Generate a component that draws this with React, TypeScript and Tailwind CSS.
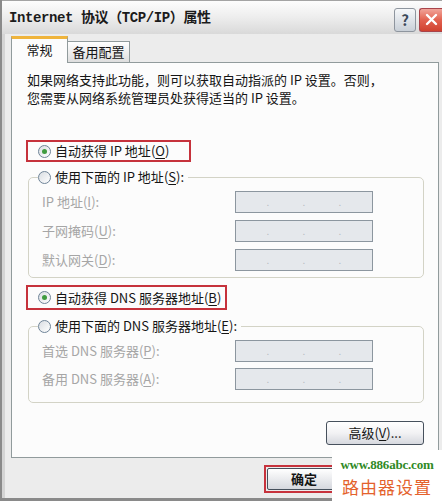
import React from 'react'

function Radio({ checked }: { checked?: boolean }) {
    return (
        <span className="flex h-[13px] w-[13px] shrink-0 items-center justify-center rounded-full border border-[#6f8498] bg-linear-to-br from-[#d9dde2] to-white">
            {checked && (
                <span className="h-[5px] w-[5px] rounded-full bg-[#3f9b3f]" />
            )}
        </span>
    )
}

function Key({ k }: { k: string }) {
    return (
        <>
            (<span className="underline underline-offset-2">{k}</span>)
        </>
    )
}

function IpBox() {
    return (
        <div className="flex h-[22px] w-[138px] items-center justify-around border border-[#8c969f] bg-[#e5e8ec] px-[14px] text-[10px] leading-none text-[#b8bcc2]">
            <span>.</span>
            <span>.</span>
            <span>.</span>
        </div>
    )
}

function Row({ label }: { label: React.ReactNode }) {
    return (
        <div className="flex h-[22px] items-center">
            <span className="w-[197px] pl-[4px] text-[#a6a6a6]">{label}</span>
            <IpBox />
        </div>
    )
}

export default function App() {
    return (
        <div className="relative h-[501px] w-[442px] overflow-hidden bg-[#ececec] font-['Noto_Sans_CJK_SC',sans-serif] text-[13px] leading-[18px] text-[#151515]">
            <div className="flex h-full flex-col border-b-[3px] border-l-[2px] border-[#8a8a8a]">
                {/* title bar */}
                <div className="flex h-[34px] shrink-0 items-center justify-between border-t border-[#a4a4a4] bg-linear-to-b from-[#fdfdfd] via-[#ededed] to-[#d9d9d9] pl-[7px]">
                    <span className="font-['Liberation_Mono','Noto_Sans_CJK_SC',monospace] text-[14px] font-bold tracking-[-0.4px] text-[#1b1b1b]">
                        Internet 协议（TCP/IP）属性
                    </span>
                    <div className="flex items-center gap-[3px] pt-[4px]">
                        <div className="flex h-[24px] w-[22px] items-center justify-center rounded-[3px] border border-[#8e959e] bg-linear-to-b from-[#f6f8fa] to-[#c9d0d8] text-[15px] font-bold text-[#3d4a5a]">
                            ?
                        </div>
                        <div className="flex h-[24px] w-[23px] items-center justify-center rounded-l-[3px] border border-r-0 border-[#a8434a] bg-linear-to-b from-[#f0a49a] via-[#e2614f] to-[#d0412f]">
                            <svg width="13" height="13" viewBox="0 0 13 13">
                                <path
                                    d="M2 2 L11 11 M11 2 L2 11"
                                    stroke="white"
                                    strokeWidth="2.4"
                                    strokeLinecap="round"
                                />
                            </svg>
                        </div>
                    </div>
                </div>

                {/* body */}
                <div className="flex flex-1 flex-col border-l-[3px] border-[#d4d4d4] pl-[6px] pr-[3px] pt-[2px]">
                    <div className="relative z-10 flex items-end">
                        <div className="-mb-px flex h-[27px] w-[57px] items-center justify-center border-x border-t-[3px] border-x-[#919b9c] border-t-[#efb43c] bg-[#fcfcfc] pb-[2px]">
                            常规
                        </div>
                        <div className="flex h-[21px] w-[62px] items-center justify-center border-r border-t border-[#919b9c] bg-linear-to-b from-white to-[#dedede]">
                            备用配置
                        </div>
                    </div>

                    <div className="flex h-[396px] flex-col border border-[#919b9c] bg-[#fcfcfc] px-[14px] pt-[8px]">
                        <p className="ml-[1px]">
                            如果网络支持此功能，则可以获取自动指派的 IP 设置。否则，
                            <br />
                            您需要从网络系统管理员处获得适当的 IP 设置。
                        </p>

                        <div className="mt-[33px] flex h-[22px] w-[165px] items-center gap-[4px] border-2 border-[#c6323c] pl-[10px]">
                            <Radio checked />
                            <span>
                                自动获得 IP 地址<Key k="O" />
                            </span>
                        </div>

                        <fieldset className="ml-[2px] mt-[6px] rounded-[5px] border border-[#d3d3c6] pb-[6px] pl-[9px]">
                            <legend className="flex h-[18px] items-center gap-[4px] pr-[4px]">
                                <Radio />
                                <span>
                                    使用下面的 IP 地址<Key k="S" />:
                                </span>
                            </legend>
                            <div className="mt-[5px] flex flex-col gap-[7px]">
                                <Row label={<>IP 地址<Key k="I" />:</>} />
                                <Row label={<>子网掩码<Key k="U" />:</>} />
                                <Row label={<>默认网关<Key k="D" />:</>} />
                            </div>
                        </fieldset>

                        <div className="mt-[7px] flex h-[25px] w-[201px] items-center gap-[4px] border-2 border-[#c6323c] pl-[10px]">
                            <Radio checked />
                            <span>
                                自动获得 DNS 服务器地址<Key k="B" />
                            </span>
                        </div>

                        <fieldset className="ml-[2px] mt-[7px] rounded-[5px] border border-[#d3d3c6] pb-[12px] pl-[9px]">
                            <legend className="flex h-[18px] items-center gap-[4px] pr-[4px]">
                                <Radio />
                                <span>
                                    使用下面的 DNS 服务器地址<Key k="E" />:
                                </span>
                            </legend>
                            <div className="mt-[5px] flex flex-col gap-[6px]">
                                <Row label={<>首选 DNS 服务器<Key k="P" />:</>} />
                                <Row label={<>备用 DNS 服务器<Key k="A" />:</>} />
                            </div>
                        </fieldset>

                        <div className="mt-[18px] flex justify-end">
                            <div className="flex h-[24px] w-[98px] items-center justify-center rounded-[3px] border border-[#46505c] bg-linear-to-b from-white via-[#f2f2f4] to-[#d6d8de]">
                                高级<Key k="V" />...
                            </div>
                        </div>
                    </div>

                    <div className="pl-[253px] pt-[7px]">
                        <div className="flex h-[28px] w-[80px] items-center border-2 border-[#c6323c] p-[1px]">
                            <div className="flex h-full w-full items-center justify-center rounded-[2px] border border-[#46505c] bg-linear-to-b from-white to-[#d6d8de] font-bold">
                                确定
                            </div>
                        </div>
                    </div>
                </div>
            </div>

            {/* watermark */}
            <div className="absolute bottom-0 right-0 flex h-[51px] w-[110px] flex-col items-center bg-white pt-[6px]">
                <span className="whitespace-nowrap font-['Liberation_Serif',serif] text-[13px] font-bold leading-[17px] tracking-[-0.2px] text-[#2f8a25]">
                    www.886abc.com
                </span>
                <span className="mt-[4px] text-[17px] leading-[20px] tracking-[1px] text-[#e4622c]">
                    路由器设置
                </span>
            </div>
        </div>
    )
}
